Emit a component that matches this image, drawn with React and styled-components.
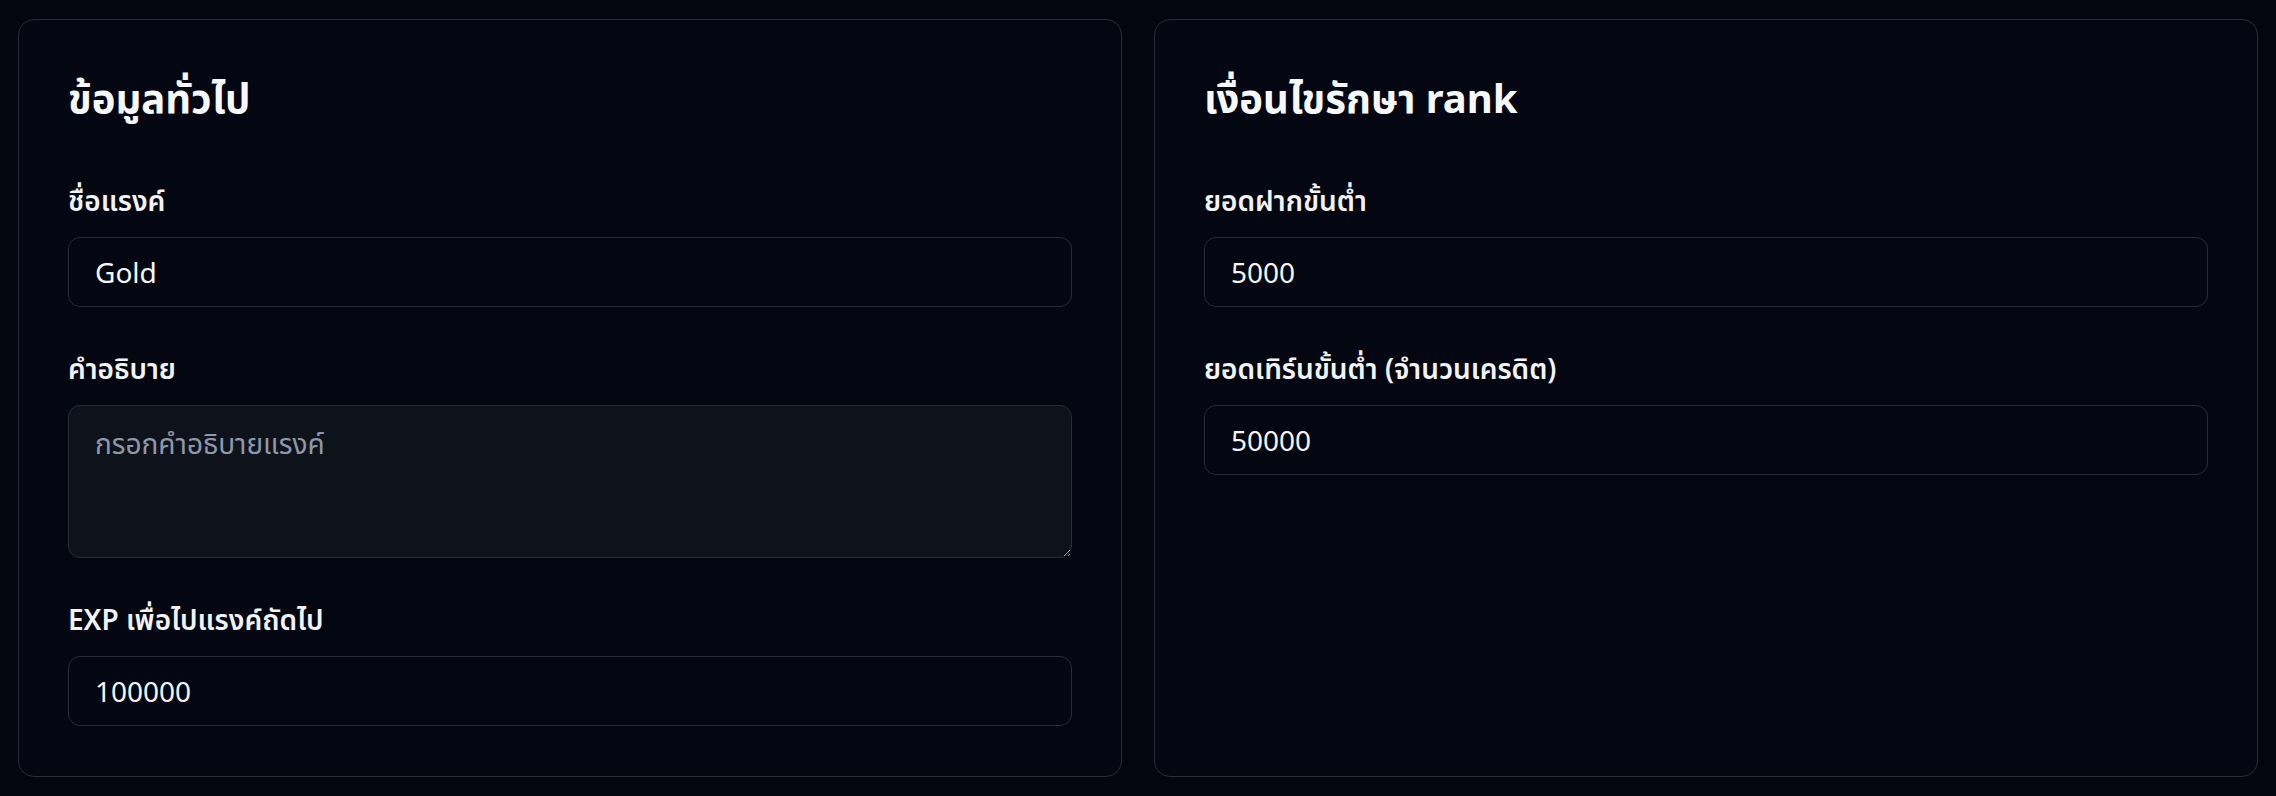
import React from 'react';
import styled, { createGlobalStyle } from 'styled-components';

const GlobalStyle = createGlobalStyle`
  * { box-sizing: border-box; }
  html, body {
    margin: 0;
    background: #03060f;
    color: #f5f6f8;
    font-family: "Noto Sans", "Noto Sans Thai", sans-serif;
  }
`;

const Page = styled.div`
  padding: 19px 18px;
  display: grid;
  grid-template-columns: 1fr 1fr;
  gap: 32px;
  align-items: stretch;
`;

const Card = styled.section`
  background: #040711;
  border: 1px solid #272c37;
  border-radius: 16px;
  padding: 54px 49px 49px;
  min-height: 758px;
`;

const CardTitle = styled.h2`
  margin: 0 0 60px;
  font-size: 40px;
  line-height: 48px;
  font-weight: 700;
  color: #f7f8fa;
`;

const Field = styled.div`
  display: flex;
  flex-direction: column;
  & + & { margin-top: 43px; }
`;

const Label = styled.label`
  font-size: 28px;
  line-height: 36px;
  font-weight: 600;
  color: #f2f3f5;
  margin-bottom: 19px;
`;

const Input = styled.input`
  height: 70px;
  width: 100%;
  padding: 0 26px;
  font-family: inherit;
  font-size: 28px;
  color: #f5f6f8;
  background: #040711;
  border: 1px solid #272c37;
  border-radius: 12px;
  outline: none;
`;

const TextArea = styled.textarea`
  height: 153px;
  width: 100%;
  padding: 16px 26px;
  font-family: inherit;
  font-size: 28px;
  line-height: 42px;
  color: #f5f6f8;
  background: #0e121b;
  border: 1px solid #272c37;
  border-radius: 12px;
  outline: none;
  resize: vertical;

  &::placeholder { color: #8e98ab; }
`;

export default function App() {
  return (
    <>
      <GlobalStyle />
      <Page>
        <Card>
          <CardTitle>ข้อมูลทั่วไป</CardTitle>
          <Field>
            <Label>ชื่อแรงค์</Label>
            <Input defaultValue="Gold" />
          </Field>
          <Field>
            <Label>คำอธิบาย</Label>
            <TextArea placeholder="กรอกคำอธิบายแรงค์" />
          </Field>
          <Field>
            <Label>EXP เพื่อไปแรงค์ถัดไป</Label>
            <Input defaultValue="100000" />
          </Field>
        </Card>
        <Card>
          <CardTitle>เงื่อนไขรักษา rank</CardTitle>
          <Field>
            <Label>ยอดฝากขั้นต่ำ</Label>
            <Input defaultValue="5000" />
          </Field>
          <Field>
            <Label>ยอดเทิร์นขั้นต่ำ (จำนวนเครดิต)</Label>
            <Input defaultValue="50000" />
          </Field>
        </Card>
      </Page>
    </>
  );
}
